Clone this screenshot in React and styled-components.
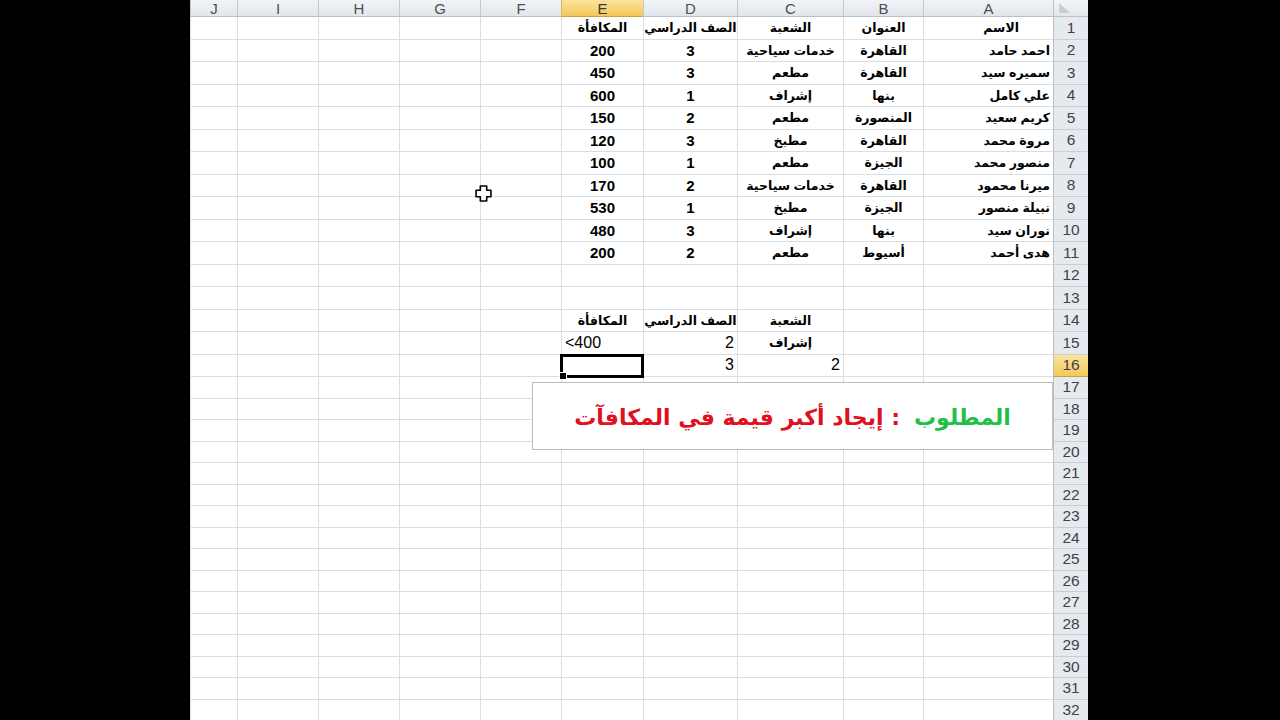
import styled, { createGlobalStyle } from "styled-components";

const GlobalStyle = createGlobalStyle`
  html, body {
    margin: 0;
    padding: 0;
    background: #000;
  }
  * {
    box-sizing: border-box;
  }
`;

const COLS = [
  { key: "A", w: 130 },
  { key: "B", w: 80 },
  { key: "C", w: 106 },
  { key: "D", w: 94 },
  { key: "E", w: 82 },
  { key: "F", w: 81 },
  { key: "G", w: 81 },
  { key: "H", w: 81 },
  { key: "I", w: 81 },
  { key: "J", w: 47 },
];

const ROW_COUNT = 32;
const rowHeight = (r) => (r <= 16 ? 22.5 : 21.5);

const names = ["احمد حامد", "سميره سيد", "علي كامل", "كريم سعيد", "مروة محمد", "منصور محمد", "ميرنا محمود", "نبيلة منصور", "نوران سيد", "هدى أحمد"];
const cities = ["القاهرة", "القاهرة", "بنها", "المنصورة", "القاهرة", "الجيزة", "القاهرة", "الجيزة", "بنها", "أسيوط"];
const branches = ["خدمات سياحية", "مطعم", "إشراف", "مطعم", "مطبخ", "مطعم", "خدمات سياحية", "مطبخ", "إشراف", "مطعم"];
const grades = ["3", "3", "1", "2", "3", "1", "2", "1", "3", "2"];
const rewards = ["200", "450", "600", "150", "120", "100", "170", "530", "480", "200"];

// cell contents: data[row][col]
const data = {};
const put = (r, c, text, opts = {}) => {
  data[r] = data[r] || {};
  data[r][c] = { text, align: "center", bold: true, ...opts };
};

put(1, "A", "الاسم", { align: "right", indent: 34 });
put(1, "B", "العنوان");
put(1, "C", "الشعبة");
put(1, "D", "الصف الدراسي");
put(1, "E", "المكافأة");
names.forEach((n, i) => {
  const r = i + 2;
  put(r, "A", n, { align: "right" });
  put(r, "B", cities[i]);
  put(r, "C", branches[i]);
  put(r, "D", grades[i], { num: true });
  put(r, "E", rewards[i], { num: true });
});
put(14, "C", "الشعبة");
put(14, "D", "الصف الدراسي");
put(14, "E", "المكافأة");
put(15, "C", "إشراف");
put(15, "D", "2", { align: "right", bold: false, num: true });
put(15, "E", "<400", { align: "left", bold: false, num: true, ltr: true });
put(16, "C", "2", { align: "right", bold: false, num: true });
put(16, "D", "3", { align: "right", bold: false, num: true });

const Page = styled.div`
  display: flex;
  width: 1280px;
  height: 720px;
  overflow: hidden;
  background: #000;
`;

const SideBar = styled.div`
  flex: none;
  width: ${({ $w }) => $w}px;
  background: #000;
`;

const Sheet = styled.div`
  position: relative;
  flex: none;
  width: 898px;
  height: 720px;
  overflow: hidden;
  background: #fff;
`;

const Grid = styled.div`
  direction: rtl;
  display: grid;
  grid-template-columns: 35px ${COLS.map((c) => `${c.w}px`).join(" ")};
  grid-template-rows: 17px ${Array.from({ length: ROW_COUNT }, (_, i) => `${rowHeight(i + 1)}px`).join(" ")};
  font-family: "Liberation Sans", "DejaVu Sans", Arial, sans-serif;
`;

const Corner = styled.div`
  position: relative;
  background: linear-gradient(#f3f5f8, #e3e7ec);
  border-left: 1px solid #b9c0c9;
  border-bottom: 1px solid #b9c0c9;

  &::after {
    content: "";
    position: absolute;
    left: 5px;
    top: 3px;
    width: 0;
    height: 0;
    border-left: 11px solid transparent;
    border-bottom: 10px solid #c9ced5;
    transform: scaleX(-1);
  }
`;

const ColHeader = styled.div`
  display: flex;
  align-items: center;
  justify-content: center;
  font-size: 15px;
  line-height: 1;
  color: ${({ $active }) => ($active ? "#3a3a3a" : "#4c4f54")};
  background: ${({ $active }) =>
    $active ? "linear-gradient(#fae49c, #f4c85a)" : "linear-gradient(#f2f4f7, #e2e6eb)"};
  border-left: 1px solid ${({ $active }) => ($active ? "#d9b55a" : "#c2c8d0")};
  border-bottom: 1px solid ${({ $active }) => ($active ? "#c9a344" : "#b9c0c9")};
`;

const RowHeader = styled.div`
  display: flex;
  align-items: center;
  justify-content: center;
  font-size: 15.5px;
  color: #3f4247;
  background: ${({ $active }) => ($active ? "linear-gradient(#fae49c, #f4c85a)" : "#e6eaef")};
  border-left: 1px solid #b9c0c9;
  border-bottom: 1px solid ${({ $active }) => ($active ? "#c9a344" : "#c9ced6")};
`;

const Cell = styled.div`
  position: relative;
  display: flex;
  align-items: center;
  justify-content: ${({ $align }) =>
    $align === "right" ? "flex-start" : $align === "left" ? "flex-end" : "center"};
  padding: 0 3px;
  padding-right: ${({ $indent }) => ($indent ? `${$indent}px` : "3px")};
  overflow: visible;
  white-space: nowrap;
  border-left: 1px solid #dadde2;
  border-bottom: 1px solid #dadde2;
  font-size: ${({ $num, $bold }) => ($num ? ($bold ? "15px" : "16px") : "12.5px")};
  font-weight: ${({ $bold }) => ($bold ? 700 : 400)};
  color: #000;

  ${({ $selected }) =>
    $selected &&
    `
    outline: 3px solid #000;
    outline-offset: -2px;
    z-index: 2;
    &::after {
      content: "";
      position: absolute;
      left: -3px;
      bottom: -4px;
      width: 6px;
      height: 6px;
      background: #000;
      border: 1px solid #fff;
    }
  `}
`;

const CellText = styled.span`
  direction: ${({ $ltr }) => ($ltr ? "ltr" : "rtl")};
`;

const NoteBox = styled.div`
  position: absolute;
  left: 342px;
  top: 382px;
  width: 521px;
  height: 68px;
  display: flex;
  align-items: center;
  justify-content: center;
  gap: 14px;
  direction: rtl;
  white-space: nowrap;
  background: #fff;
  border: 1px solid #bdbdbd;
  z-index: 3;
  font-family: "DejaVu Sans", "Liberation Sans", sans-serif;
  font-weight: 700;
  font-size: 22px;
  padding-top: 2px;
`;

const NoteLabel = styled.span`
  color: #1fbf4a;
`;

const NoteText = styled.span`
  color: #e0101e;
`;

const Cursor = styled.svg`
  position: absolute;
  left: 285px;
  top: 185px;
  z-index: 4;
`;

function App() {
  const cells = [];
  cells.push(<Corner key="corner" />);
  COLS.forEach((c) =>
    cells.push(
      <ColHeader key={`h-${c.key}`} $active={c.key === "E"}>
        {c.key}
      </ColHeader>
    )
  );

  for (let r = 1; r <= ROW_COUNT; r++) {
    cells.push(
      <RowHeader key={`r-${r}`} $active={r === 16}>
        {r}
      </RowHeader>
    );
    COLS.forEach((c) => {
      const d = data[r] && data[r][c.key];
      cells.push(
        <Cell
          key={`${c.key}${r}`}
          $align={d ? d.align : "center"}
          $bold={d ? d.bold : false}
          $num={d ? d.num : false}
          $indent={d ? d.indent : 0}
          $selected={r === 16 && c.key === "E"}
        >
          {d && <CellText $ltr={d.ltr}>{d.text}</CellText>}
        </Cell>
      );
    });
  }

  return (
    <Page>
      <GlobalStyle />
      <SideBar $w={190} />
      <Sheet>
        <Grid>{cells}</Grid>
        <NoteBox>
          <NoteLabel>المطلوب</NoteLabel>
          <NoteText>: إيجاد أكبر قيمة في المكافآت</NoteText>
        </NoteBox>
        <Cursor width="17" height="17" viewBox="0 0 16 16">
          <path
            d="M5 1h6v4h4v6h-4v4H5v-4H1V5h4z"
            fill="#fff"
            stroke="#000"
            strokeWidth="1.5"
            strokeLinejoin="round"
          />
        </Cursor>
      </Sheet>
      <SideBar $w={192} />
    </Page>
  );
}

export default App;
